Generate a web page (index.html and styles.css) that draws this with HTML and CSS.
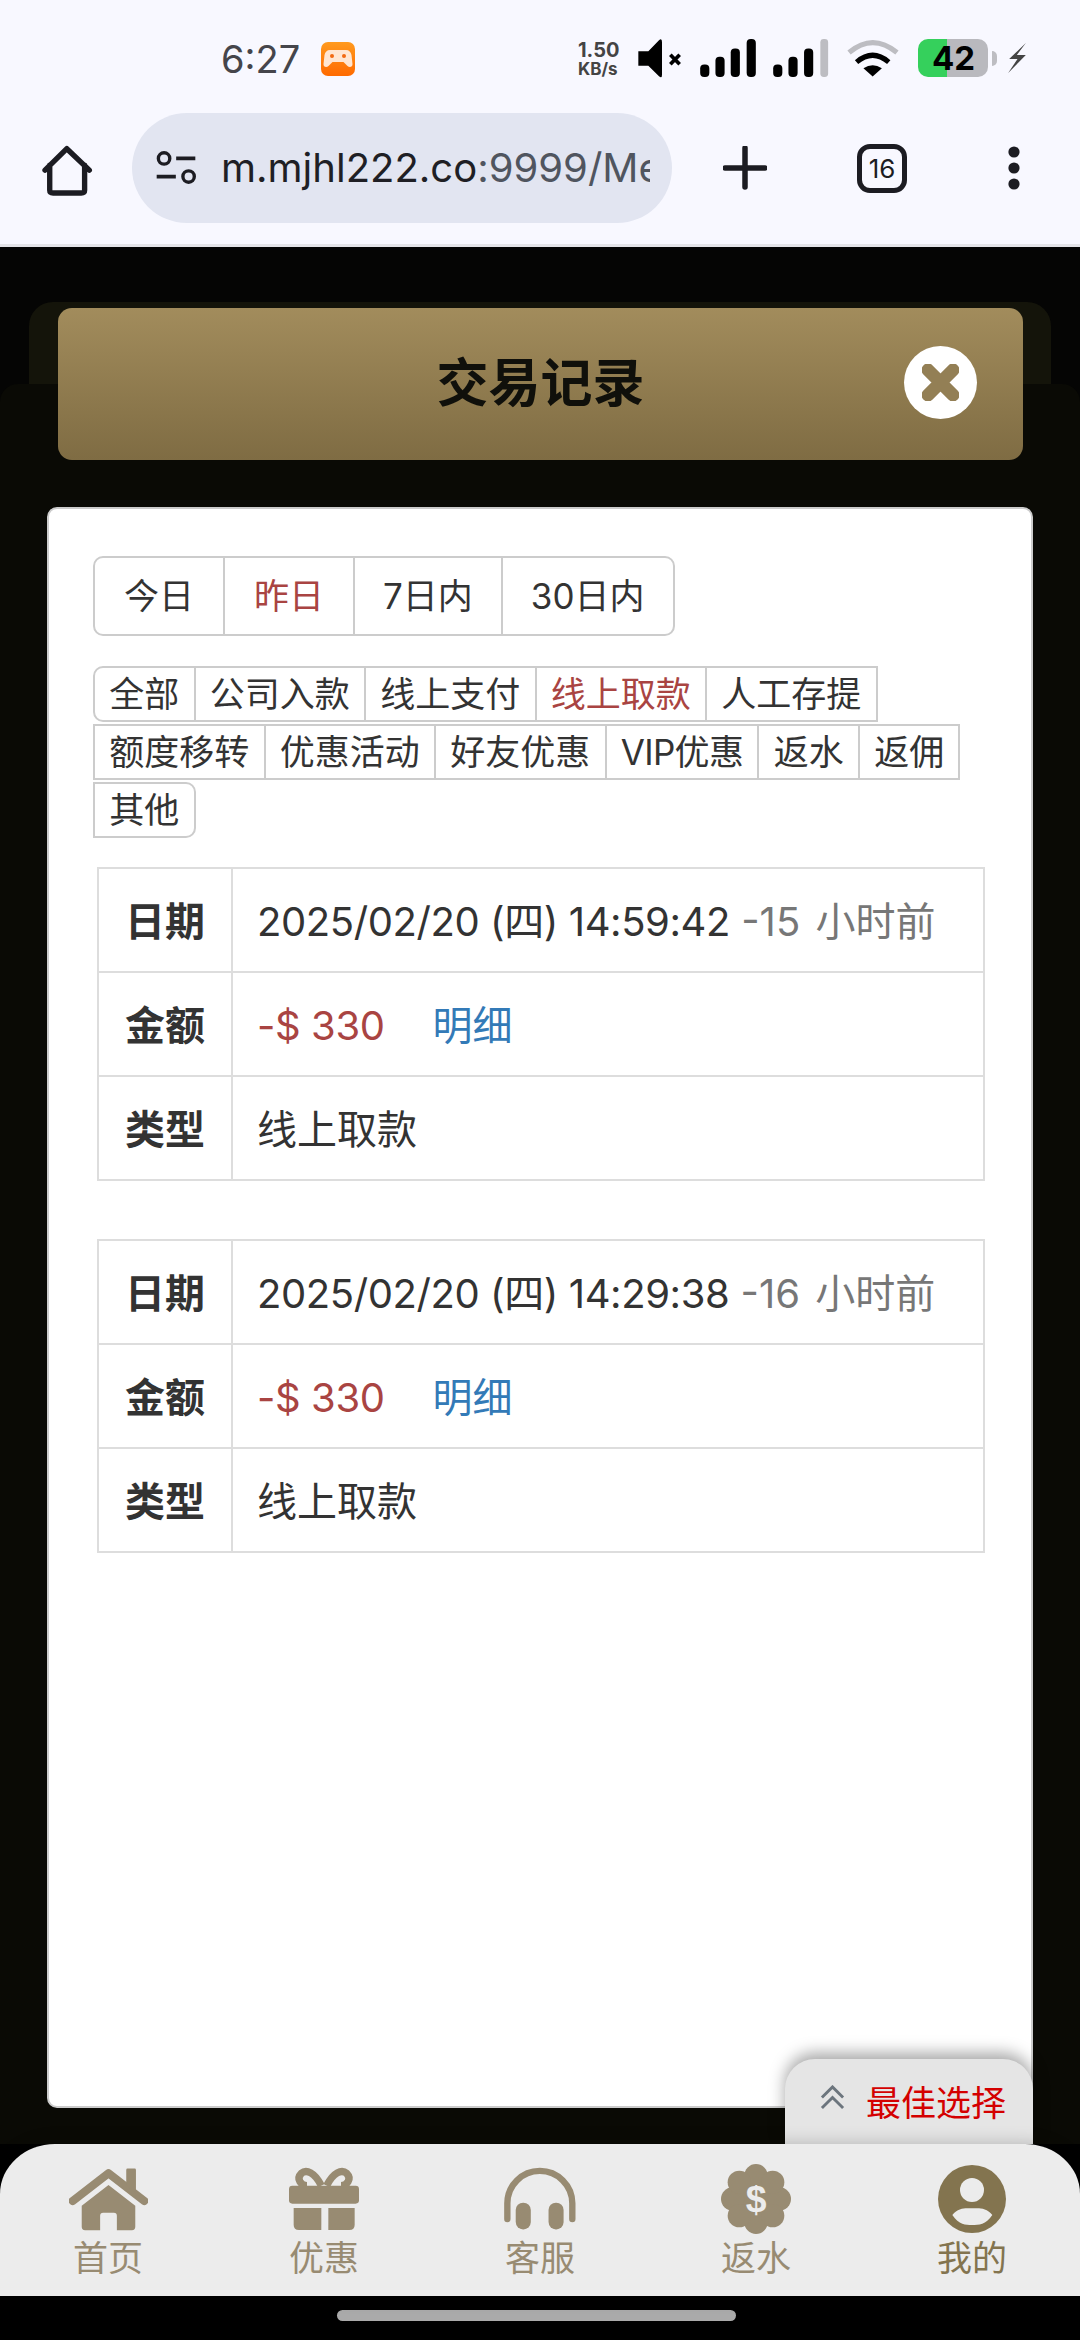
FILE: index.html
```html
<!DOCTYPE html>
<html lang="zh">
<head>
<meta charset="utf-8">
<title>交易记录</title>
<link rel="stylesheet" href="styles.css">
</head>
<body>
<div class="screen">
  <header class="chrome">
    <div class="status">
      <span class="clock">6:27</span>
      <svg class="game" viewBox="0 0 34 34"><defs><linearGradient id="orange" x1="0" y1="0" x2="0" y2="1"><stop offset="0" stop-color="#ff9a1f"/><stop offset="1" stop-color="#ff6a00"/></linearGradient></defs><rect width="34" height="34" rx="7" fill="url(#orange)"/><path d="M9 8h16c3 0 5 2 5.500 5l1 9c.3 3-3 4-5 2l-4-4h-11l-4 4c-2 2-5.300 1-5-2l1-9C4 10 6 8 9 8z" fill="#ffe6d2"/><circle cx="11" cy="14" r="2" fill="#f26a12"/><circle cx="23" cy="14" r="2" fill="#f26a12"/></svg>
      <div class="speed"><span class="speed-num">1.50</span><span class="speed-unit">KB/s</span></div>
      <svg class="mute" viewBox="232 58 133 117"><path d="M232 95H262L294 62Q303 54 303 68V165Q303 178 294 170L262 138H232Z" fill="#000"/><path d="M328 105L356 134M356 105L328 134" stroke="#000" stroke-width="11" fill="none"/></svg>
      <svg class="signal" viewBox="418 60 164 112"><rect x="418" y="135" width="27" height="37" rx="12"/><rect x="463" y="112" width="27" height="60" rx="12"/><rect x="508" y="88" width="27" height="84" rx="12"/><rect x="555" y="60" width="27" height="112" rx="12"/></svg>
      <svg class="signal sim2" viewBox="638 60 164 112"><rect x="638" y="135" width="27" height="37" rx="12"/><rect x="683" y="112" width="27" height="60" rx="12"/><rect x="729" y="88" width="27" height="84" rx="12"/><rect class="off" x="777" y="60" width="23" height="112" rx="10"/></svg>
      <svg class="wifi" viewBox="860 62 152 108"><path d="M866 100Q935 42 1006 100" stroke="#bdbdc2" stroke-width="15" fill="none"/><path d="M888 128Q935 88 982 128" stroke="#000" stroke-width="15" fill="none"/><path d="M908 146Q935 128 962 146L935 170Z" fill="#000"/></svg>
      <div class="battery"><span class="battery-level">42</span></div>
      <svg class="bolt" viewBox="1342 72 53 90"><path d="M1395 72L1345 120H1370L1342 162L1395 108H1368Z" fill="#444"/></svg>
    </div>
    <div class="toolbar">
      <svg class="home" viewBox="60 365 155 155"><path d="M72 440L137 376L204 440M86 425V500Q86 508 96 508H180Q190 508 190 500V425" fill="none" stroke="#1c1c22" stroke-width="16" stroke-linecap="round" stroke-linejoin="round"/></svg>
      <div class="address">
        <svg class="tune" viewBox="405 388 125 105"><circle cx="432" cy="412" r="17" fill="none" stroke="#1c1c22" stroke-width="10"/><path d="M468 412H525M410 466H467" stroke="#1c1c22" stroke-width="11"/><circle cx="505" cy="466" r="17" fill="none" stroke="#1c1c22" stroke-width="10"/></svg>
        <div class="url"><span class="host">m.mjhl222.co</span>:9999/Member/Transaction</div>
      </div>
      <svg class="plus" viewBox="0 0 44 44"><path d="M22 2V41M2 22H42" stroke="#1c1c22" stroke-width="5.500" stroke-linecap="round"/></svg>
      <div class="tabs-count">16</div>
      <svg class="menu" viewBox="0 0 18 44"><circle cx="9" cy="6" r="5.600"/><circle cx="9" cy="22" r="5.600"/><circle cx="9" cy="38" r="5.600"/></svg>
    </div>
  </header>

  <main class="page">
    <div class="modal-back"></div>
    <section class="sheet">
      <div class="modal-title">
        <h1 class="title">交易记录</h1>
        <button class="close" aria-label="关闭"><svg viewBox="0 0 37 37"><path d="M6 6L31 31M31 6L6 31" stroke="#937f55" stroke-width="13" stroke-linecap="round"/></svg></button>
      </div>
      <div class="card">
        <div class="range">
          <span class="range-item">今日</span>
          <span class="range-item on">昨日</span>
          <span class="range-item">7日内</span>
          <span class="range-item">30日内</span>
        </div>
        <div class="kinds">
          <span class="kind">全部</span>
          <span class="kind">公司入款</span>
          <span class="kind">线上支付</span>
          <span class="kind on">线上取款</span>
          <span class="kind">人工存提</span>
          <span class="kind">额度移转</span>
          <span class="kind">优惠活动</span>
          <span class="kind">好友优惠</span>
          <span class="kind kind-vip">VIP优惠</span>
          <span class="kind">返水</span>
          <span class="kind">返佣</span>
          <span class="kind">其他</span>
        </div>
        <table class="record">
          <tr><th>日期</th><td><span class="stamp">2025/02/20 (四) 14:59:42</span> <span class="ago">-15 小时前</span></td></tr>
          <tr><th>金额</th><td><span class="amount">-$ 330</span><a class="detail">明细</a></td></tr>
          <tr><th>类型</th><td>线上取款</td></tr>
        </table>
        <table class="record">
          <tr><th>日期</th><td><span class="stamp">2025/02/20 (四) 14:29:38</span> <span class="ago">-16 小时前</span></td></tr>
          <tr><th>金额</th><td><span class="amount">-$ 330</span><a class="detail">明细</a></td></tr>
          <tr><th>类型</th><td>线上取款</td></tr>
        </table>
      </div>
      <button class="best">
        <svg viewBox="0 0 26 26"><path d="M2 13L13 2L24 13M2 24L13 13L24 24" fill="none" stroke="#6c757d" stroke-width="3"/></svg>
        <span>最佳选择</span>
      </button>
    </section>
  </main>

  <nav class="dock">
    <a class="dock-item">
      <svg class="dock-icon" viewBox="147 50 236 190" style="width:79px"><path d="M158 151L265 68L372 151" fill="none" stroke="currentColor" stroke-width="24" stroke-linecap="round" stroke-linejoin="round"/><path d="M318 58Q318 54 322 54H343Q347 54 347 58V128L318 104Z" fill="currentColor"/><path d="M185 165L265 103L345 165V228Q345 238 335 238H290V195Q290 186 281 186H249Q240 186 240 195V238H195Q185 238 185 228Z" fill="currentColor"/></svg>
      <span class="dock-label">首页</span>
    </a>
    <a class="dock-item">
      <svg class="dock-icon" viewBox="808 50 210 190" style="width:70px"><path d="M905 105C885 65 860 55 845 68C828 85 845 105 862 105M921 105C941 65 966 55 981 68C998 85 981 105 964 105" fill="none" stroke="currentColor" stroke-width="22"/><rect x="808" y="105" width="210" height="54" rx="10" fill="currentColor"/><path d="M822 172H905V238H838Q822 238 822 222Z" fill="currentColor"/><path d="M926 172H1005V222Q1005 238 989 238H926Z" fill="currentColor"/></svg>
      <span class="dock-label">优惠</span>
    </a>
    <a class="dock-item">
      <svg class="dock-icon" viewBox="135 52 215 190" style="width:72px"><path d="M145 207V160A97 97 0 0 1 339 160V207" fill="none" stroke="currentColor" stroke-width="19" stroke-linecap="round"/><rect x="170" y="158" width="45" height="80" rx="22" fill="currentColor"/><rect x="268" y="158" width="45" height="80" rx="22" fill="currentColor"/></svg>
      <span class="dock-label">客服</span>
    </a>
    <a class="dock-item">
      <svg class="dock-icon" viewBox="-105 -105 210 210" style="width:70px"><g fill="currentColor"><circle r="76"/><circle cx="70" r="35"/><circle cx="-70" r="35"/><circle cy="70" r="35"/><circle cy="-70" r="35"/><circle cx="50" cy="50" r="35"/><circle cx="-50" cy="50" r="35"/><circle cx="50" cy="-50" r="35"/><circle cx="-50" cy="-50" r="35"/></g><text class="dollar" y="40" text-anchor="middle">$</text></svg>
      <span class="dock-label">返水</span>
    </a>
    <a class="dock-item active">
      <svg class="dock-icon" viewBox="357 345 204 204" style="width:68px"><circle cx="459" cy="447" r="102" fill="currentColor"/><circle cx="459" cy="420" r="36" fill="#ececec"/><path d="M400 495C420 470 445 475 459 475C475 475 500 470 520 495C500 525 480 525 459 525C440 525 420 525 400 495Z" fill="#ececec"/></svg>
      <span class="dock-label">我的</span>
    </a>
  </nav>
  <div class="gesture"><div class="gesture-pill"></div></div>
</div>
</body>
</html>
```
FILE: styles.css
```css
* { box-sizing: border-box; }

html, body {
  margin: 0;
  padding: 0;
  background: #000;
}

body {
  font-family: "Inter", "Noto Sans CJK SC", sans-serif;
  color: #333;
}

.screen {
  width: 1080px;
  height: 2340px;
  display: flex;
  flex-direction: column;
  overflow: hidden;
}

/* Phone status bar and browser toolbar */
.chrome {
  height: 247px;
  flex: none;
  background: #f8f8ff;
  border-bottom: 3px solid #e4e4e8;
}

.status {
  height: 98px;
  padding: 39px 0 0 221px;
  display: flex;
  align-items: flex-start;
}

.clock {
  width: 100px;
  font-size: 38px;
  line-height: 40px;
  color: #45454b;
}

.game { width: 34px; height: 34px; margin-top: 3px; }

.speed {
  margin-left: 223px;
  display: flex;
  flex-direction: column;
  font-weight: 700;
  color: #444;
  margin-top: 1px;
}

.speed-num { font-size: 20px; line-height: 20px; }
.speed-unit { font-size: 17px; line-height: 19px; }

.mute { width: 45px; height: 39px; margin-left: 19px; }

.signal { width: 56px; height: 38px; margin-left: 17px; fill: #000; }
.signal .off { fill: #bdbdc2; }

.wifi { width: 52px; height: 38px; margin-left: 18px; }

.battery {
  position: relative;
  width: 70px;
  height: 38px;
  margin-left: 19px;
  border-radius: 10px;
  background: linear-gradient(90deg, #35d05c 42%, #b9b9be 42%);
  text-align: center;
}

.battery::after {
  content: "";
  position: absolute;
  right: -9px;
  top: 12px;
  width: 5px;
  height: 15px;
  border-radius: 0 5px 5px 0;
  background: #bdbdc2;
}

.battery-level {
  font-size: 33px;
  font-weight: 700;
  line-height: 38px;
  color: #000;
}

.bolt { width: 18px; height: 30px; margin: 4px 0 0 20px; }

.toolbar {
  height: 146px;
  display: flex;
  align-items: center;
  padding-left: 41px;
}

.home { width: 52px; height: 52px; margin-right: 39px; }

.address {
  width: 540px;
  height: 110px;
  margin-top: -6px;
  padding-left: 23px;
  display: flex;
  align-items: center;
  border-radius: 55px;
  background: #e2e5f1;
}

.tune { width: 42px; height: 36px; flex: none; }

.url {
  width: 429px;
  margin-left: 24px;
  overflow: hidden;
  white-space: nowrap;
  font-size: 40px;
  line-height: 54px;
  color: #50555f;
}

.host { color: #1f1f25; }

.plus { width: 44px; height: 44px; margin: -6px 0 0 51px; }

.tabs-count {
  width: 50px;
  height: 49px;
  margin: -6px 0 0 90px;
  border: 5px solid #1c1c22;
  border-radius: 13px;
  font-size: 26px;
  line-height: 39px;
  text-align: center;
  color: #1c1c22;
}

.menu { width: 18px; height: 44px; margin: -6px 0 0 98px; fill: #1c1c22; }

/* Page behind the modal */
.page {
  flex: 1;
  min-height: 0;
  display: flex;
  flex-direction: column;
  background: #050504;
}

.modal-back {
  flex: none;
  height: 82px;
  margin: 55px 29px 0;
  border-radius: 24px 24px 0 0;
  background: #14140a;
}

.sheet {
  position: relative;
  flex: 1;
  min-height: 0;
  display: flex;
  flex-direction: column;
  background: #0a0a05;
  border-radius: 18px 18px 0 0;
}

.modal-title {
  position: relative;
  flex: none;
  height: 152px;
  margin: -76px 57px 0 58px;
  display: flex;
  align-items: center;
  justify-content: center;
  border-radius: 14px;
  background: linear-gradient(180deg, #a28c5c, #7f6c43);
}

.title {
  margin: -10px 0 0;
  font-size: 52px;
  font-weight: 700;
  color: #10100b;
}

.close {
  position: absolute;
  top: 38px;
  right: 46px;
  width: 73px;
  height: 73px;
  padding: 18px;
  border: 0;
  border-radius: 50%;
  background: #fff;
}

.close svg { display: block; width: 37px; height: 37px; }

.card {
  flex: 1;
  margin: 47px 47px 36px;
  padding: 47px 44px 0;
  border: 2px solid #ccc;
  border-radius: 10px;
  background: #fff;
}

/* Date range switch */
.range {
  display: inline-flex;
  height: 80px;
  vertical-align: top;
  border: 2px solid #ccc;
  border-radius: 10px;
}

.range-item {
  padding: 0 28px;
  font-size: 35px;
  line-height: 76px;
  border-left: 2px solid #ccc;
}

.range-item:nth-child(-n+2) { padding: 0 29px; }

.range-item:first-child { border-left: 0; }

.on { color: #a94442; }

/* Transaction kind filters */
.kinds {
  display: flex;
  flex-wrap: wrap;
  row-gap: 2px;
  margin-top: 30px;
}

.kind {
  height: 56px;
  margin-left: -2px;
  padding: 0 14.250px;
  border: 2px solid #ccc;
  font-size: 35px;
  line-height: 52px;
}

.kind:first-child { margin-left: 0; border-radius: 10px 0 0 10px; }
.kind:nth-child(6) { margin-left: 0; }
.kind:last-child { margin-left: 0; border-radius: 0 10px 10px 0; }
.kind-vip { letter-spacing: -.7px; }

/* Record tables */
.record {
  width: 888px;
  margin: 29px 0 58px 4px;
  border-collapse: collapse;
  font-size: 40px;
  table-layout: fixed;
}

.record + .record { margin-top: 0; }

.record tr { height: 104px; }

.record th,
.record td {
  padding: 0 0 3px 24px;
  border: 2px solid #ddd;
  font-weight: 400;
  text-align: left;
  white-space: nowrap;
}

.record th {
  width: 134px;
  padding: 0 0 3px;
  font-weight: 700;
  text-align: center;
}

.stamp { letter-spacing: -.42px; }
.ago { color: #777; word-spacing: 4px; }
.amount { color: #a94442; letter-spacing: -.4px; }
.detail { margin-left: 48px; color: #337ab7; }

/* Floating shortcut */
.best {
  position: absolute;
  right: 47px;
  bottom: 0;
  width: 248px;
  height: 85px;
  padding: 0 0 0 35px;
  display: flex;
  align-items: center;
  gap: 21px;
  border: 0;
  border-radius: 30px 30px 0 0;
  background: #e5e5e5;
  box-shadow: 0 -6px 16px rgba(0, 0, 0, .35);
  font-family: inherit;
  font-size: 35px;
  color: #d40000;
}

.best svg { width: 25px; height: 25px; margin-top: -8px; }
.best span { margin-top: -2px; }

/* Bottom navigation */
.dock {
  position: relative;
  z-index: 2;
  flex: none;
  height: 152px;
  padding-top: 19px;
  display: flex;
  border-radius: 55px 55px 0 0 / 50px 50px 0 0;
  background: #ececec;
  box-shadow: 0 0 18px rgba(0, 0, 0, .22);
}

.dock-item {
  flex: 1;
  display: flex;
  flex-direction: column;
  align-items: center;
  color: #988b72;
  font-size: 35px;
  line-height: 40px;
}

.dock-item.active { color: #83744f; }

.dock-icon { height: 72px; }

.dock-label { margin-top: 3px; }

.dollar {
  font-family: "Liberation Sans", sans-serif;
  font-size: 112px;
  font-weight: 700;
  fill: #ececec;
}

.gesture {
  flex: none;
  height: 44px;
  padding-top: 14px;
  background: #000;
}

.gesture-pill {
  width: 399px;
  height: 11px;
  margin-left: 337px;
  border-radius: 6px;
  background: #aaa;
}
```
